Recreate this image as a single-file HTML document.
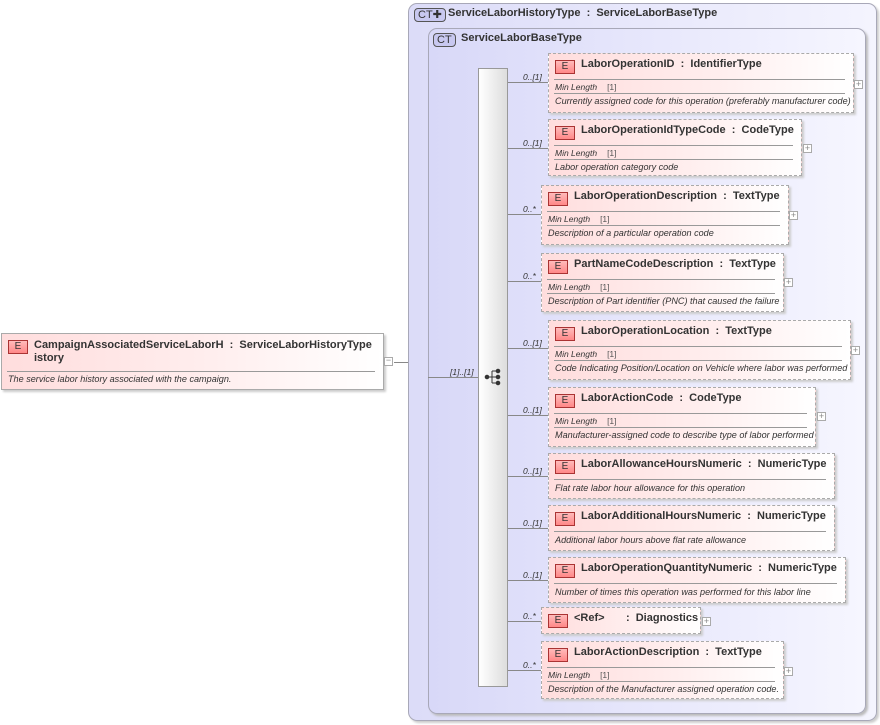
<!DOCTYPE html>
<html><head><meta charset="utf-8"><style>
*{margin:0;padding:0;box-sizing:border-box}
body{width:880px;height:725px;background:#fff;position:relative;overflow:hidden;font-family:"Liberation Sans",Arial,sans-serif;color:#222}
.a{position:absolute}
.outer{left:408px;top:3px;width:469px;height:718px;border:1px solid #a8a8b8;border-radius:9px;background:linear-gradient(90deg,#dcdcf8,#f4f4fe);box-shadow:2px 2px 2px #ccc}
.inner{left:428px;top:28px;width:438px;height:686px;border:1px solid #a8a8b8;border-radius:9px;background:linear-gradient(90deg,#d8d8f8,#f6f6ff);box-shadow:2px 2px 2px #bbb}
.ct{border:1px solid #555;border-radius:4px;background:#c8c8f0;font-size:11px;height:14px;line-height:12px;padding:0 3px;color:#333}
.hdr{font-size:11px;font-weight:bold;color:#333;white-space:pre}
.seq{left:478px;top:68px;width:30px;height:619px;border:1px solid #999;background:linear-gradient(90deg,#fff,#ddd)}
.box{position:absolute;border:1px dashed #aaa;background:linear-gradient(90deg,#fdd 0%,#fee 55%,#fff 100%);box-shadow:2px 2px 2px #ccc}
.box.solid{border:1px solid #aaa}
.e{position:absolute;left:6px;top:6px;width:20px;height:14px;border:1px solid #a33;background:linear-gradient(#fbb,#f88);font-size:10px;text-align:center;line-height:12px;color:#333}
.t{position:absolute;left:32px;top:4px;font-size:11px;font-weight:bold;color:#333;white-space:pre}
.s{position:absolute;left:5px;right:8px;height:1px;background:#999}
.ml{position:absolute;left:6px;font-size:8.5px;font-style:italic;color:#333;white-space:nowrap}
.ml span{font-style:normal;margin-left:10px;color:#555}
.d{position:absolute;left:6px;font-size:9.1px;font-style:italic;color:#333;white-space:nowrap}
.pl{position:absolute;width:9px;height:9px;border:1px solid #aaa;background:#fff;font-size:9px;line-height:7px;text-align:center;color:#888}
.hl{position:absolute;height:1px;background:#888}
.c{position:absolute;font-size:8.5px;font-style:italic;color:#333}
</style></head><body>
<div class="a outer"></div>
<div class="a ct" style="left:414px;top:8px">CT✚</div>
<div class="a hdr" style="left:448px;top:7px">ServiceLaborHistoryType  :  ServiceLaborBaseType</div>
<div class="a inner"></div>
<div class="a ct" style="left:433px;top:33px">CT</div>
<div class="a hdr" style="left:461px;top:32px">ServiceLaborBaseType</div>
<div class="a seq"></div>
<svg class="a" style="left:484px;top:368px" width="18" height="18"><g fill="#333" stroke="#333"><circle cx="3" cy="9" r="1.8"/><line x1="3" y1="9" x2="8" y2="9"/><line x1="8" y1="3" x2="8" y2="15"/><line x1="8" y1="3" x2="13" y2="3"/><line x1="8" y1="9" x2="13" y2="9"/><line x1="8" y1="15" x2="13" y2="15"/><circle cx="14" cy="3" r="1.8"/><circle cx="14" cy="9" r="1.8"/><circle cx="14" cy="15" r="1.8"/></g></svg>

<div class="box solid" style="left:1px;top:333px;width:383px;height:57px">
<div class="e">E</div>
<div class="t" style="top:5px;line-height:13px">CampaignAssociatedServiceLaborH  :  ServiceLaborHistoryType
istory</div>
<div class="s" style="top:37px"></div>
<div class="d" style="top:40px">The service labor history associated with the campaign.</div>
</div>
<div class="pl" style="left:384px;top:357px;line-height:5px">−</div>
<div class="hl" style="left:394px;top:362px;width:14px"></div>
<div class="hl" style="left:428px;top:377px;width:50px"></div>
<div class="c" style="left:450px;top:367px">[1]..[1]</div>

<div class="hl" style="left:508px;top:82px;width:40px"></div><div class="c" style="left:523px;top:72px">0..[1]</div>
<div class="box" style="left:548px;top:53px;width:306px;height:60px"><div class="e">E</div><div class="t">LaborOperationID  :  IdentifierType</div><div class="s" style="top:25px"></div><div class="ml" style="top:28px">Min Length<span>[1]</span></div><div class="s" style="top:39px"></div><div class="d" style="top:42px">Currently assigned code for this operation (preferably manufacturer code)</div></div>
<div class="pl" style="left:854px;top:80px">+</div>

<div class="hl" style="left:508px;top:148px;width:40px"></div><div class="c" style="left:523px;top:138px">0..[1]</div>
<div class="box" style="left:548px;top:119px;width:254px;height:57px"><div class="e">E</div><div class="t">LaborOperationIdTypeCode  :  CodeType</div><div class="s" style="top:25px"></div><div class="ml" style="top:28px">Min Length<span>[1]</span></div><div class="s" style="top:39px"></div><div class="d" style="top:42px">Labor operation category code</div></div>
<div class="pl" style="left:803px;top:144px">+</div>

<div class="hl" style="left:508px;top:214px;width:33px"></div><div class="c" style="left:523px;top:204px">0..*</div>
<div class="box" style="left:541px;top:185px;width:248px;height:60px"><div class="e">E</div><div class="t">LaborOperationDescription  :  TextType</div><div class="s" style="top:25px"></div><div class="ml" style="top:28px">Min Length<span>[1]</span></div><div class="s" style="top:39px"></div><div class="d" style="top:42px">Description of a particular operation code</div></div>
<div class="pl" style="left:789px;top:211px">+</div>

<div class="hl" style="left:508px;top:281px;width:33px"></div><div class="c" style="left:523px;top:271px">0..*</div>
<div class="box" style="left:541px;top:253px;width:243px;height:59px"><div class="e">E</div><div class="t">PartNameCodeDescription  :  TextType</div><div class="s" style="top:25px"></div><div class="ml" style="top:28px">Min Length<span>[1]</span></div><div class="s" style="top:39px"></div><div class="d" style="top:42px">Description of Part identifier (PNC) that caused the failure</div></div>
<div class="pl" style="left:784px;top:278px">+</div>

<div class="hl" style="left:508px;top:348px;width:40px"></div><div class="c" style="left:523px;top:338px">0..[1]</div>
<div class="box" style="left:548px;top:320px;width:303px;height:60px"><div class="e">E</div><div class="t">LaborOperationLocation  :  TextType</div><div class="s" style="top:25px"></div><div class="ml" style="top:28px">Min Length<span>[1]</span></div><div class="s" style="top:39px"></div><div class="d" style="top:42px">Code Indicating Position/Location on Vehicle where labor was performed</div></div>
<div class="pl" style="left:851px;top:346px">+</div>

<div class="hl" style="left:508px;top:415px;width:40px"></div><div class="c" style="left:523px;top:405px">0..[1]</div>
<div class="box" style="left:548px;top:387px;width:268px;height:60px"><div class="e">E</div><div class="t">LaborActionCode  :  CodeType</div><div class="s" style="top:25px"></div><div class="ml" style="top:28px">Min Length<span>[1]</span></div><div class="s" style="top:39px"></div><div class="d" style="top:42px">Manufacturer-assigned code to describe type of labor performed</div></div>
<div class="pl" style="left:817px;top:412px">+</div>

<div class="hl" style="left:508px;top:476px;width:40px"></div><div class="c" style="left:523px;top:466px">0..[1]</div>
<div class="box" style="left:548px;top:453px;width:287px;height:46px"><div class="e">E</div><div class="t">LaborAllowanceHoursNumeric  :  NumericType</div><div class="s" style="top:25px"></div><div class="d" style="top:29px">Flat rate labor hour allowance for this operation</div></div>

<div class="hl" style="left:508px;top:528px;width:40px"></div><div class="c" style="left:523px;top:518px">0..[1]</div>
<div class="box" style="left:548px;top:505px;width:287px;height:46px"><div class="e">E</div><div class="t">LaborAdditionalHoursNumeric  :  NumericType</div><div class="s" style="top:25px"></div><div class="d" style="top:29px">Additional labor hours above flat rate allowance</div></div>

<div class="hl" style="left:508px;top:580px;width:40px"></div><div class="c" style="left:523px;top:570px">0..[1]</div>
<div class="box" style="left:548px;top:557px;width:298px;height:46px"><div class="e">E</div><div class="t">LaborOperationQuantityNumeric  :  NumericType</div><div class="s" style="top:25px"></div><div class="d" style="top:29px">Number of times this operation was performed for this labor line</div></div>

<div class="hl" style="left:508px;top:621px;width:33px"></div><div class="c" style="left:523px;top:611px">0..*</div>
<div class="box" style="left:541px;top:607px;width:160px;height:27px"><div class="e">E</div><div class="t">&lt;Ref&gt;       :  Diagnostics</div></div>
<div class="pl" style="left:702px;top:617px">+</div>

<div class="hl" style="left:508px;top:670px;width:33px"></div><div class="c" style="left:523px;top:660px">0..*</div>
<div class="box" style="left:541px;top:641px;width:243px;height:58px"><div class="e">E</div><div class="t">LaborActionDescription  :  TextType</div><div class="s" style="top:25px"></div><div class="ml" style="top:28px">Min Length<span>[1]</span></div><div class="s" style="top:39px"></div><div class="d" style="top:42px">Description of the Manufacturer assigned operation code.</div></div>
<div class="pl" style="left:784px;top:667px">+</div>
</body></html>
